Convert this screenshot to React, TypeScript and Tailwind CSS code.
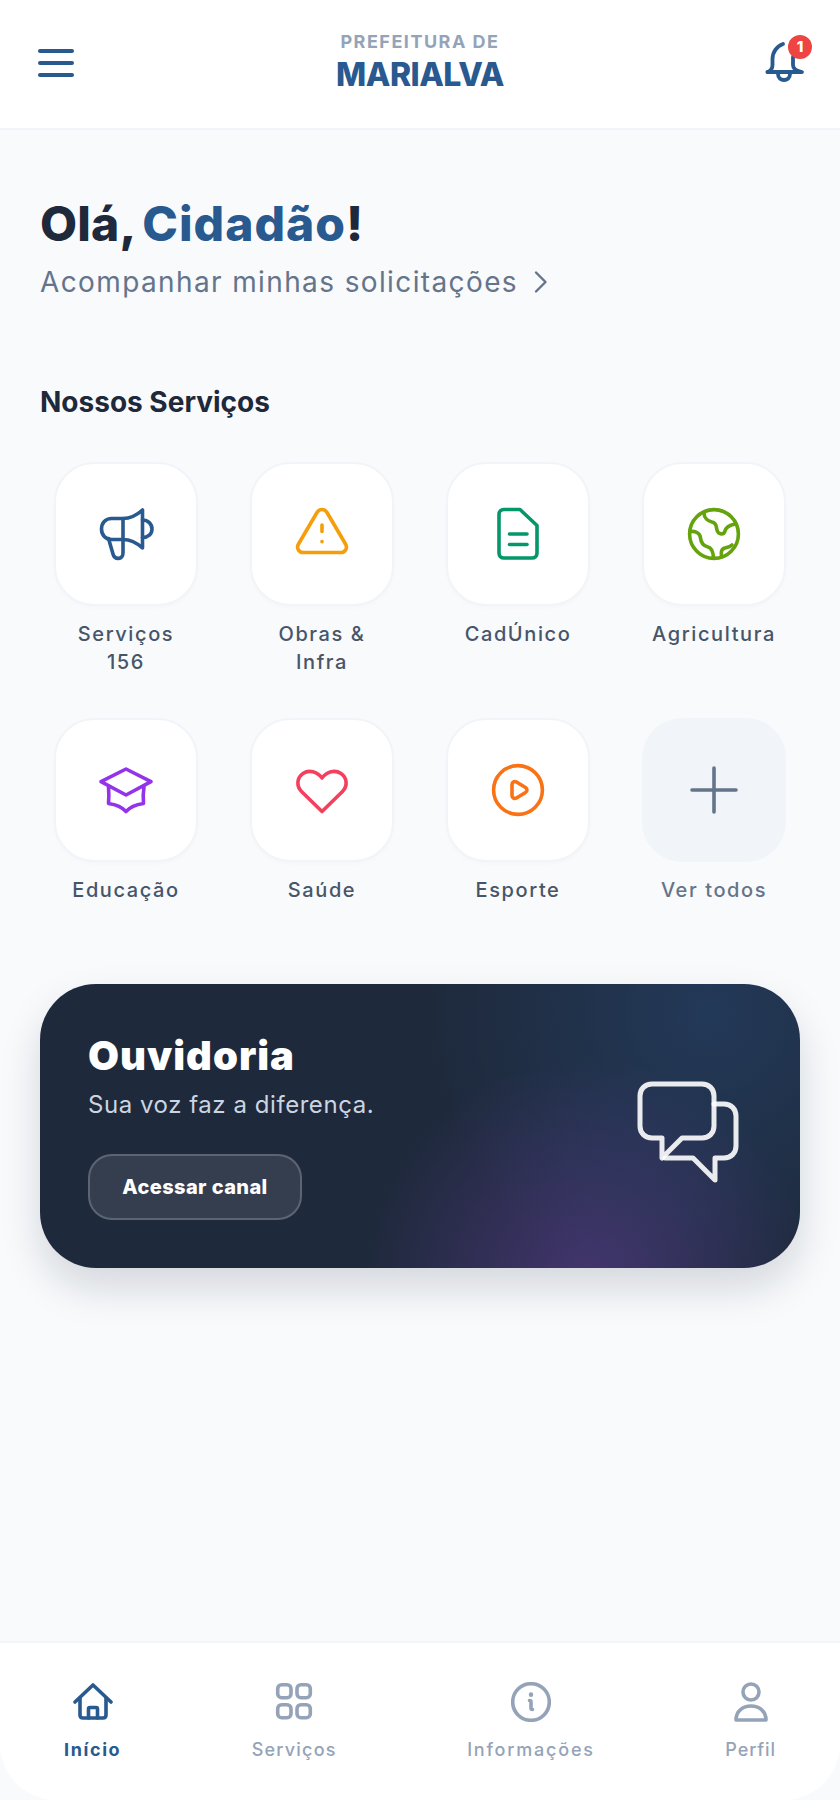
import type { ReactNode } from 'react';

const services: { label: ReactNode; color: string; icon: ReactNode }[] = [
    {
        label: <>Serviços<br />156</>,
        color: 'text-[#28598f]',
        icon: (
            <>
                <path d="M27 14.5H15.5C9.5 14.5 5.5 19 5.5 25C5.5 31 9.5 35.5 15.5 35.5H27V14.5Z" />
                <path d="M27 14.5C35 14.5 41 11 46.5 6V44C41 39 35 35.5 27 35.5" />
                <path d="M12.5 34.5L17 50C18.5 56 27 56 27 49V35.5" />
                <path d="M46.5 16C52 16 56 20 56 25C56 30 52 33.5 46.5 33.5" />
            </>
        ),
    },
    {
        label: <>Obras &amp;<br />Infra</>,
        color: 'text-[#f59e0b]',
        icon: (
            <>
                <path d="M25 8.5C27.5 4.5 32.5 4.5 35 8.5L53.5 40C56 44 53 48.5 49 48.5H11C7 48.5 4 44 6.5 40Z" />
                <path d="M30 21V27.5" />
                <path d="M30 37.6V37.8" />
            </>
        ),
    },
    {
        label: 'CadÚnico',
        color: 'text-[#059669]',
        icon: (
            <>
                <path d="M16 5.5H32L49 21.5V49C49 52 47 54 44 54H16C13 54 11 52 11 49V10.5C11 7.5 13 5.5 16 5.5Z" />
                <path d="M21.5 30H39" />
                <path d="M21.5 40.5H39" />
            </>
        ),
    },
    {
        label: 'Agricultura',
        color: 'text-[#65a30d]',
        icon: (
            <>
                <circle cx="30" cy="30" r="24.4" />
                <path d="M20 9C20 14 24 17 28 18C33 19 32 23 33 26C34 31 40 31 41 27C42 23 46 21 51 20" />
                <path d="M6 27.5C11 27 16 29 16.5 34C17 39 20 42 24 43C28 44 29 48 29.5 53" />
                <path d="M37.5 53C37 48 37 45 41 44C43 43.5 46 43 48 41" />
            </>
        ),
    },
    {
        label: 'Educação',
        color: 'text-[#9333ea]',
        icon: (
            <>
                <path d="M30 9L55 21.7L30 35L5 21.7Z" />
                <path d="M12.5 27C13 33 13 38 12.5 43.5C19 44.5 26 47 30 51.5C34 47 41 44.5 47.5 43.5C47 38 47 33 48 27" />
            </>
        ),
    },
    {
        label: 'Saúde',
        color: 'text-[#f43f5e]',
        icon: <path d="M30 51.5L9.5 31.5C4 26 5 17.5 11 13.5C17 9.5 25 11.5 30 18C35 11.5 43 9.5 49 13.5C55 17.5 56 26 50.5 31.5Z" />,
    },
    {
        label: 'Esporte',
        color: 'text-[#f97316]',
        icon: (
            <>
                <circle cx="30" cy="30" r="24.4" />
                <path d="M24 24.5C24 22 26.5 21 28.5 22L37.5 27.5C39.5 28.7 39.5 31.3 37.5 32.5L28.5 38C26.5 39 24 38 24 35.5Z" />
            </>
        ),
    },
];

function Icon({ size = 60, box = 60, className, children }: { size?: number; box?: number; className?: string; children: ReactNode }) {
    return (
        <svg
            width={size}
            height={size}
            viewBox={`0 0 ${box} ${box}`}
            fill="none"
            stroke="currentColor"
            strokeWidth={box === 130 ? 5 : 3.6}
            strokeLinecap="round"
            strokeLinejoin="round"
            className={className}
        >
            {children}
        </svg>
    );
}

export default function App() {
    return (
        <div className="flex min-h-[1800px] flex-col bg-[#f8fafc] font-[Inter,sans-serif]">
            {/* Header */}
            <header className="flex h-[130px] shrink-0 items-center justify-between border-b-2 border-[#f1f5f9] bg-white px-9 pb-[2px]">
                <button className="w-10 text-[#28598f]">
                    <Icon size={40} box={40}>
                        <path d="M4 8H36" strokeWidth={4} />
                        <path d="M4 20H36" strokeWidth={4} />
                        <path d="M4 32H36" strokeWidth={4} />
                    </Icon>
                </button>
                <div className="flex flex-col items-center">
                    <span className="text-[18px] leading-[24px] font-bold tracking-[1.5px] text-[#94a3b8]">PREFEITURA DE</span>
                    <span className="text-[32px] leading-[42px] font-extrabold tracking-[-0.5px] text-[#28598f]">MARIALVA</span>
                </div>
                <div className="relative h-12 w-10 text-[#28598f]">
                    <Icon size={48} box={48} className="absolute -left-1 top-0">
                        <path d="M7.5 33C10.5 32 12.5 30 12.5 26V20C12.5 13 17 7 23 5" strokeWidth={3.8} />
                        <path d="M33 18V26C33 30 36 32 42 33H7.5" strokeWidth={3.8} />
                        <path d="M18 35C18 43 30 43 30 35" strokeWidth={3.8} />
                    </Icon>
                    <span className="absolute -top-[4px] left-6 flex h-6 w-6 items-center justify-center rounded-full bg-[#ef4444] text-[15px] font-extrabold text-white">1</span>
                </div>
            </header>

            {/* Main */}
            <main className="flex-1 px-10 pt-[64px]">
                <h1 className="text-[48px] leading-[60px] font-extrabold tracking-[0.2px] text-[#1e293b]">
                    Olá, <span className="-ml-[3px] tracking-[1px] text-[#28598f]">Cidadão</span>!
                </h1>
                <div className="mt-2 flex items-center gap-[11px] text-[#64748b]">
                    <span className="text-[28px] leading-[40px] tracking-[1.38px]">Acompanhar minhas solicitações</span>
                    <Icon size={24} box={24}>
                        <path d="M7 2.5L16.5 12L7 21.5" strokeWidth={2.4} />
                    </Icon>
                </div>

                <h2 className="mt-[80px] text-[28px] leading-[40px] font-bold text-[#1e293b]">Nossos Serviços</h2>

                <div className="mt-10 grid grid-cols-4 gap-x-6 gap-y-[42px]">
                    {services.map((s, i) => (
                        <div key={i} className="flex flex-col items-center">
                            <div className={`flex h-36 w-36 items-center justify-center rounded-[40px] border-2 border-[#f1f5f9] bg-white shadow-[0_2px_4px_rgba(15,23,42,0.02)] ${s.color}`}>
                                <Icon>{s.icon}</Icon>
                            </div>
                            <span className="mt-[14px] text-center text-[20px] leading-[28px] font-[450] tracking-[1.6px] text-[#475569]">{s.label}</span>
                        </div>
                    ))}
                    <div className="flex flex-col items-center">
                        <div className="flex h-36 w-36 items-center justify-center rounded-[40px] bg-[#f1f5f9] text-[#64748b]">
                            <Icon>
                                <path d="M8 30H52" />
                                <path d="M30 8V52" />
                            </Icon>
                        </div>
                        <span className="mt-[14px] text-[20px] leading-[28px] font-[450] tracking-[1.6px] text-[#64748b]">Ver todos</span>
                    </div>
                </div>

                {/* Ouvidoria */}
                <section className="mt-[80px] flex items-center justify-between rounded-[56px] bg-[#1e293b] bg-[radial-gradient(circle_at_88%_10%,rgba(56,130,220,0.18),transparent_40%),radial-gradient(circle_at_72%_105%,rgba(168,85,247,0.27),transparent_36%)] py-12 pr-[50px] pl-12 shadow-[0_20px_40px_rgba(15,23,42,0.15)]">
                    <div>
                        <h3 className="text-[40px] leading-[48px] font-black tracking-[1px] text-white">Ouvidoria</h3>
                        <p className="mt-[9px] text-[24px] leading-[32px] tracking-[0.55px] text-[#cbd5e1]">Sua voz faz a diferença.</p>
                        <button className="mt-[33px] h-[66px] w-[214px] rounded-3xl border-2 border-white/20 bg-white/10 text-[20px] font-extrabold tracking-[0.4px] text-white">
                            Acessar canal
                        </button>
                    </div>
                    <Icon size={130} box={130} className="text-white/90">
                        <path d="M32 23H82C89 23 94 28 94 35V65C94 72 89 77 82 77H62L42 97V77H32C25 77 20 72 20 65V35C20 28 25 23 32 23Z" />
                        <path d="M94 43H104C111 43 116 48 116 55V85C116 92 111 97 104 97H95V119L73 97H45" />
                    </Icon>
                </section>
            </main>

            {/* Bottom nav */}
            <nav className="flex h-[159px] shrink-0 items-start justify-between rounded-b-[56px] border-t-2 border-[#f1f5f9] bg-white px-16 pt-[39px]">
                <div className="flex flex-col items-center text-[#28598f]">
                    <Icon size={40} box={40}>
                        <path d="M2 20L20 3L38 20" />
                        <path d="M7 16V33C7 35 8 36 10 36H30C32 36 33 35 33 33V16" />
                        <path d="M15.5 36V27C15.5 26 16 25.5 17 25.5H23C24 25.5 24.5 26 24.5 27V36" />
                    </Icon>
                    <span className="mt-[14px] text-[18px] leading-[28px] font-bold tracking-[1.6px]">Início</span>
                </div>
                <div className="flex flex-col items-center text-[#94a3b8]">
                    <Icon size={40} box={40}>
                        <rect x="3.7" y="2.7" width="13.3" height="13" rx="4" />
                        <rect x="23" y="2.7" width="13.3" height="13" rx="4" />
                        <rect x="3.7" y="22.7" width="13.3" height="13" rx="4" />
                        <rect x="23" y="22.7" width="13.3" height="13" rx="4" />
                    </Icon>
                    <span className="mt-[14px] text-[18px] leading-[28px] font-[450] tracking-[1.2px]">Serviços</span>
                </div>
                <div className="flex flex-col items-center text-[#94a3b8]">
                    <Icon size={40} box={40}>
                        <circle cx="20" cy="20" r="18.3" />
                        <path d="M20 12.5V12.7" strokeWidth={4.4} />
                        <path d="M18.5 18.5C19.5 18.5 20 19 20 20V26C20 27 20.5 27.5 21.5 27.5" />
                    </Icon>
                    <span className="mt-[14px] text-[18px] leading-[28px] font-[450] tracking-[1.8px]">Informações</span>
                </div>
                <div className="flex flex-col items-center text-[#94a3b8]">
                    <Icon size={40} box={40}>
                        <circle cx="20" cy="10" r="8" />
                        <path d="M5 38C5 29 12 24 20 24C28 24 35 29 35 38Z" />
                    </Icon>
                    <span className="mt-[14px] text-[18px] leading-[28px] font-[450] tracking-[0.9px]">Perfil</span>
                </div>
            </nav>
        </div>
    );
}
